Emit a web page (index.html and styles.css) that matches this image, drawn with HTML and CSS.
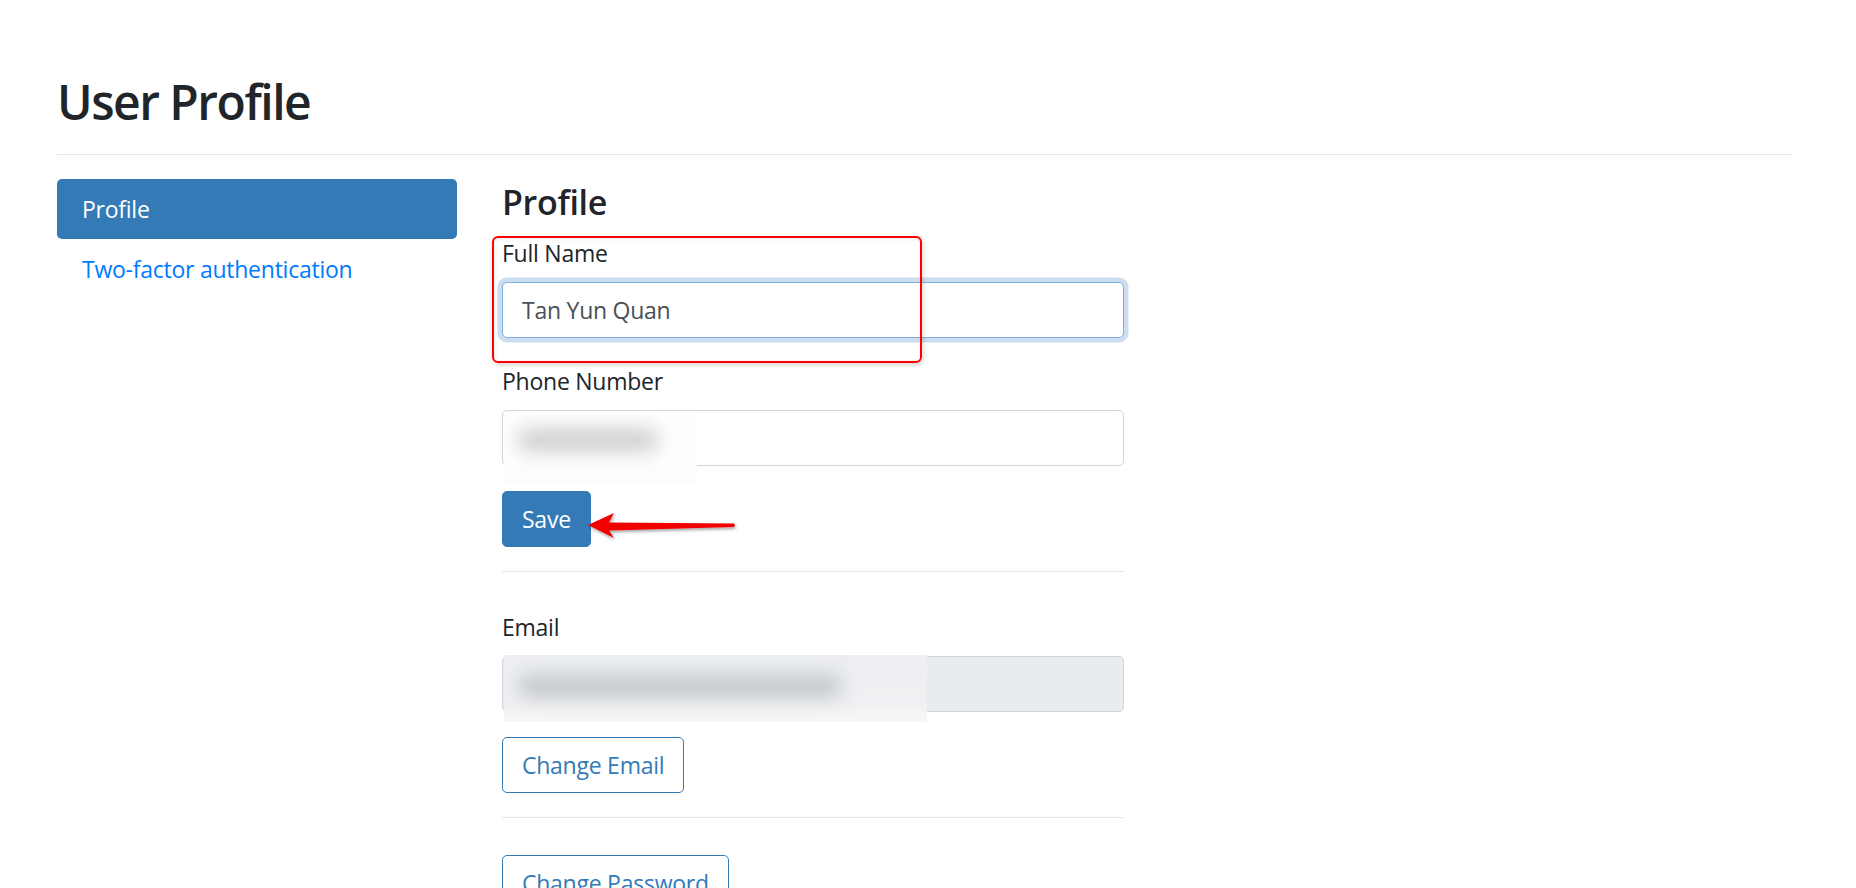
FILE: index.html
```html
<!DOCTYPE html>
<html lang="en">
<head>
<meta charset="utf-8">
<title>User Profile</title>
<link rel="stylesheet" href="styles.css">
</head>
<body>
<div class="container">
  <h1 class="page-title">User Profile</h1>
  <hr class="rule">
  <div class="row">
    <nav class="side-nav">
      <a class="nav-link active" href="#">Profile</a>
      <a class="nav-link" href="#">Two-factor authentication</a>
    </nav>
    <main class="content">
      <h3 class="section-title">Profile</h3>
      <div class="form-group annotated">
        <label class="field-label">Full Name</label>
        <input class="field focused" type="text" value="Tan Yun Quan">
        <div class="red-box"></div>
      </div>
      <div class="form-group masked">
        <label class="field-label">Phone Number</label>
        <input class="field" type="text" value="">
        <div class="blur-cover phone-cover"><div class="blob phone-blob"></div></div>
      </div>
      <div class="save-wrap">
        <button class="btn btn-primary">Save</button>
        <svg class="arrow" width="160" height="40" viewBox="0 0 160 40">
          <defs>
            <filter id="sh" x="-20%" y="-50%" width="140%" height="200%">
              <feDropShadow dx="1" dy="2" stdDeviation="1.6" flood-color="#000" flood-opacity="0.35"/>
            </filter>
          </defs>
          <polygon filter="url(#sh)" fill="#f20000" points="2,18 28,6 23,15.5 148,16.5 149,18.5 148,20 23,23.5 28,31"/>
        </svg>
      </div>
      <hr class="divider">
      <div class="form-group masked email-group">
        <label class="field-label">Email</label>
        <input class="field disabled" type="text" value="" disabled>
        <div class="blur-cover email-cover"><div class="blob email-blob"></div></div>
      </div>
      <button class="btn btn-outline">Change Email</button>
      <hr class="divider">
      <button class="btn btn-outline pw">Change Password</button>
    </main>
  </div>
</div>
</body>
</html>
```
FILE: styles.css
```css
html, body {
  margin: 0;
  padding: 0;
  background: #fff;
}
body {
  font-family: "Open Sans", "Noto Sans", sans-serif;
  color: #212529;
  font-size: 23px;
  line-height: 36px;
  letter-spacing: -0.25px;
  overflow: hidden;
}
.container {
  padding: 0 64px 0 57px;
}
.page-title {
  margin: 72px 0 0 0;
  font-size: 48px;
  line-height: 60px;
  font-weight: 600;
  letter-spacing: -1.5px;
}
.rule {
  margin: 22px 0 0 0;
  border: 0;
  border-top: 1px solid #e5e5e5;
  height: 0;
}
.row {
  display: flex;
  gap: 45px;
  margin-top: 24px;
}
.side-nav {
  width: 400px;
  display: flex;
  flex-direction: column;
}
.nav-link {
  display: block;
  padding: 12px 25px;
  line-height: 36px;
  color: #007bff;
  text-decoration: none;
  border-radius: 5px;
}
.nav-link.active {
  background: #337ab7;
  color: #fff;
}
.content {
  width: 622px;
  display: flex;
  flex-direction: column;
  align-items: flex-start;
}
.section-title {
  margin: 3px 0 13px 0;
  font-size: 34px;
  line-height: 40px;
  font-weight: 600;
  letter-spacing: -0.3px;
}
.form-group {
  position: relative;
  width: 100%;
  margin-bottom: 25px;
  display: flex;
  flex-direction: column;
}
.field-label {
  display: block;
  margin-bottom: 11px;
}
.field {
  box-sizing: border-box;
  width: 622px;
  height: 56px;
  margin: 0;
  padding: 0 19px;
  font-family: inherit;
  font-size: 23px;
  line-height: 36px;
  letter-spacing: -0.25px;
  color: #495057;
  background: #fff;
  border: 1px solid #ced4da;
  border-radius: 5px;
  outline: none;
}
.field.focused {
  border-color: #7fb1e0;
  box-shadow: 0 0 0 4.5px rgba(51, 122, 183, 0.25);
}
.field.disabled {
  background: #e9ecef;
}
.red-box {
  position: absolute;
  left: -10px;
  top: 1px;
  width: 430px;
  height: 127px;
  box-sizing: border-box;
  border: 2px solid #ff0000;
  border-radius: 6px;
  box-shadow: 1px 2px 5px rgba(0, 0, 0, 0.18), inset 1px 1px 4px rgba(0, 0, 0, 0.08);
  pointer-events: none;
}
.blur-cover {
  position: absolute;
  overflow: hidden;
}
.phone-cover {
  left: 2px;
  top: 52px;
  width: 193px;
  height: 70px;
  background: #fdfdfd;
}
.email-cover {
  left: 2px;
  top: 46px;
  width: 423px;
  height: 67px;
  background: linear-gradient(#eceef1, #eff0f2 70%, #f6f7f8);
}
.blob {
  position: absolute;
  border-radius: 14px;
  filter: blur(9px);
}
.phone-blob {
  left: 14px;
  top: 13px;
  width: 140px;
  height: 24px;
  background: #cfd1d3;
}
.email-blob {
  left: 14px;
  top: 19px;
  width: 324px;
  height: 24px;
  background: #c6c9cc;
}
.save-wrap {
  position: relative;
}
.btn {
  box-sizing: border-box;
  height: 56px;
  padding: 0 19px;
  font-family: inherit;
  font-size: 23px;
  line-height: 36px;
  letter-spacing: -0.25px;
  border-radius: 5px;
  border: 1px solid #337ab7;
  cursor: pointer;
}
.btn-primary {
  background: #337ab7;
  color: #fff;
}
.btn-outline {
  background: #fff;
  color: #337ab7;
}
.arrow {
  position: absolute;
  left: 84px;
  top: 16px;
  overflow: visible;
}
.divider {
  width: 622px;
  margin: 24px 0 0 0;
  border: 0;
  border-top: 1px solid #e5e5e5;
  height: 0;
}
.email-group {
  margin-top: 37px;
}
.pw {
  margin-top: 37px;
}
```
